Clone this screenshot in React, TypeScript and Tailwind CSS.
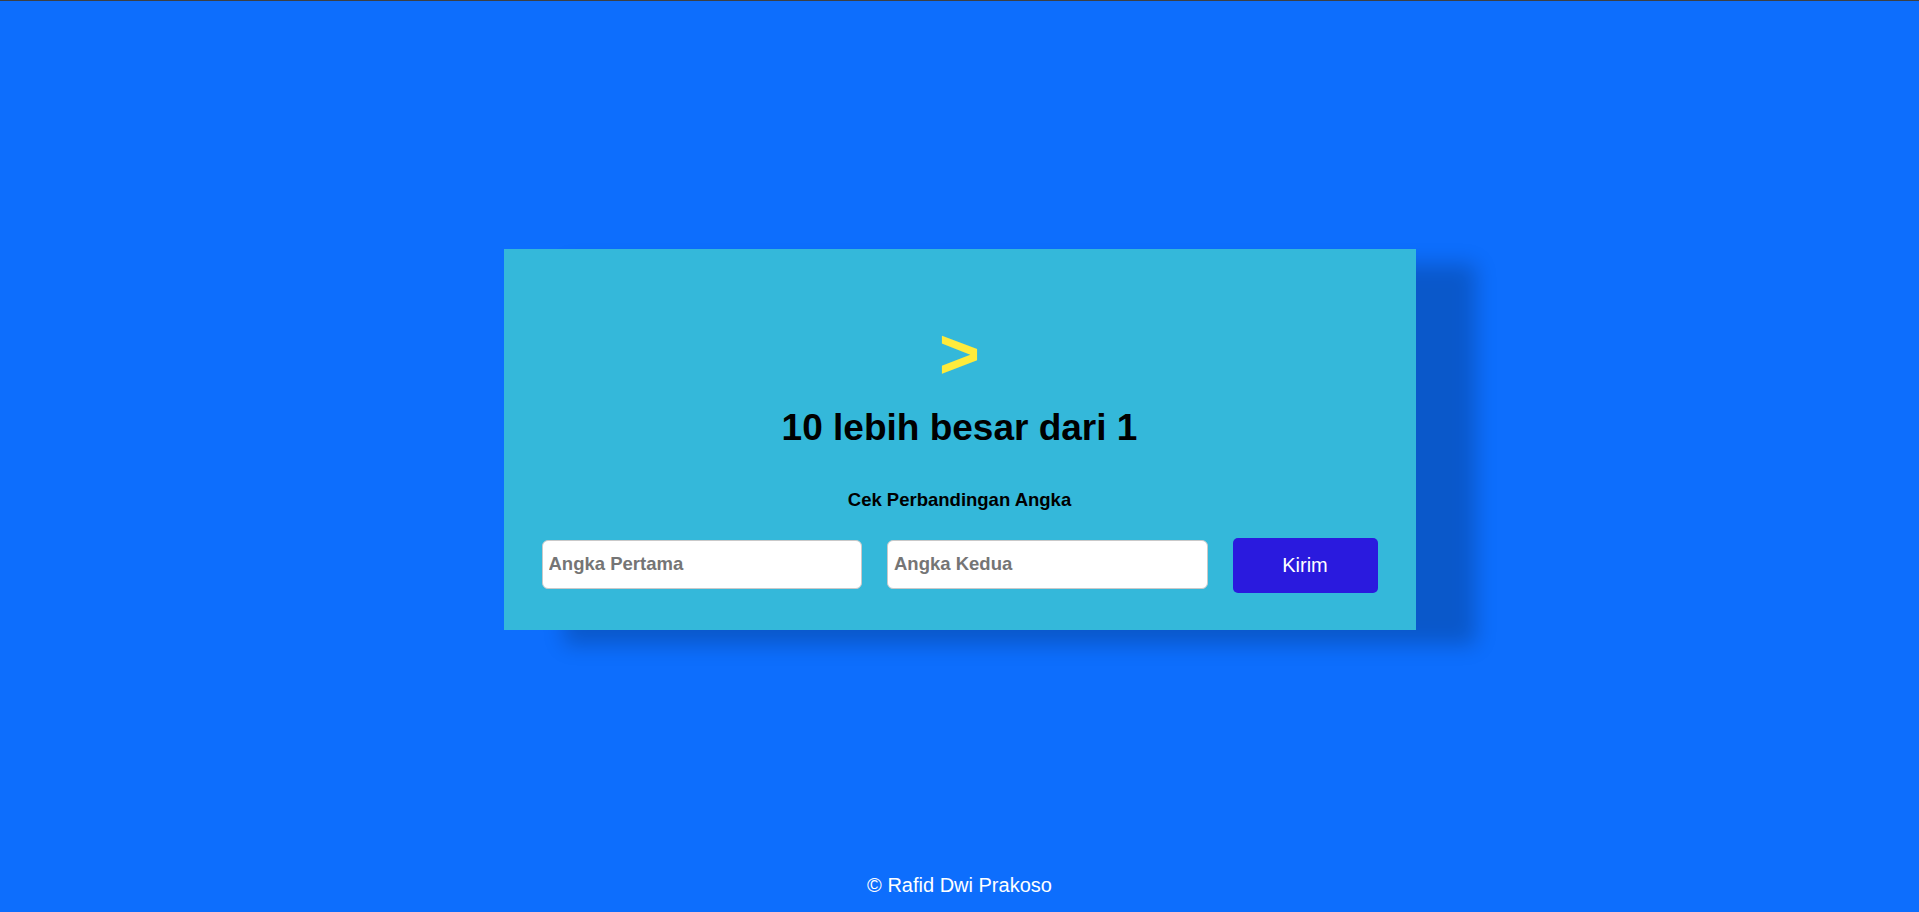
import { useState } from "react";

export default function App() {
  const [first, setFirst] = useState("");
  const [second, setSecond] = useState("");

  return (
    <div className="flex min-h-screen flex-col border-t border-[#3c4045] bg-[#0d6efd] font-['Liberation_Sans',Arial,sans-serif]">
      <main className="flex flex-1 items-center justify-center">
        <div className="flex h-[381px] w-[912px] flex-col items-center bg-[#34b8da] px-[38px] pt-[70px] pb-[37px] shadow-[60px_15px_20px_rgba(0,0,0,0.2)]">
          <div className="h-[72px] text-[70px] font-bold leading-none text-[#ffeb3b]">&gt;</div>

          <h1 className="mt-[18px] h-[37px] text-[37px] font-bold leading-none text-black">
            10 lebih besar dari 1
          </h1>

          <p className="mt-[45px] text-[18.5px] font-bold leading-[18px] text-black">
            Cek Perbandingan Angka
          </p>

          <form
            className="mt-[29px] flex h-[55px] w-full items-start gap-[25px]"
            onSubmit={(e) => e.preventDefault()}
          >
            <input
              type="number"
              value={first}
              onChange={(e) => setFirst(e.target.value)}
              placeholder="Angka Pertama"
              className="mt-[2px] h-[49px] min-w-0 flex-1 rounded-[6px] border border-[#c9c9c9] bg-white pl-[6px] text-[18.5px] font-bold text-black outline-none placeholder:text-[#757575]"
            />
            <input
              type="number"
              value={second}
              onChange={(e) => setSecond(e.target.value)}
              placeholder="Angka Kedua"
              className="mt-[2px] h-[49px] min-w-0 flex-1 rounded-[6px] border border-[#c9c9c9] bg-white pl-[6px] text-[18.5px] font-bold text-black outline-none placeholder:text-[#757575]"
            />
            <button
              type="submit"
              className="h-[55px] w-[145px] rounded-[5px] bg-[#2a1ade] text-[20px] text-white"
            >
              Kirim
            </button>
          </form>
        </div>
      </main>

      <footer className="h-[35px] text-center text-[20px] leading-[16px] text-white">
        © Rafid Dwi Prakoso
      </footer>
    </div>
  );
}
